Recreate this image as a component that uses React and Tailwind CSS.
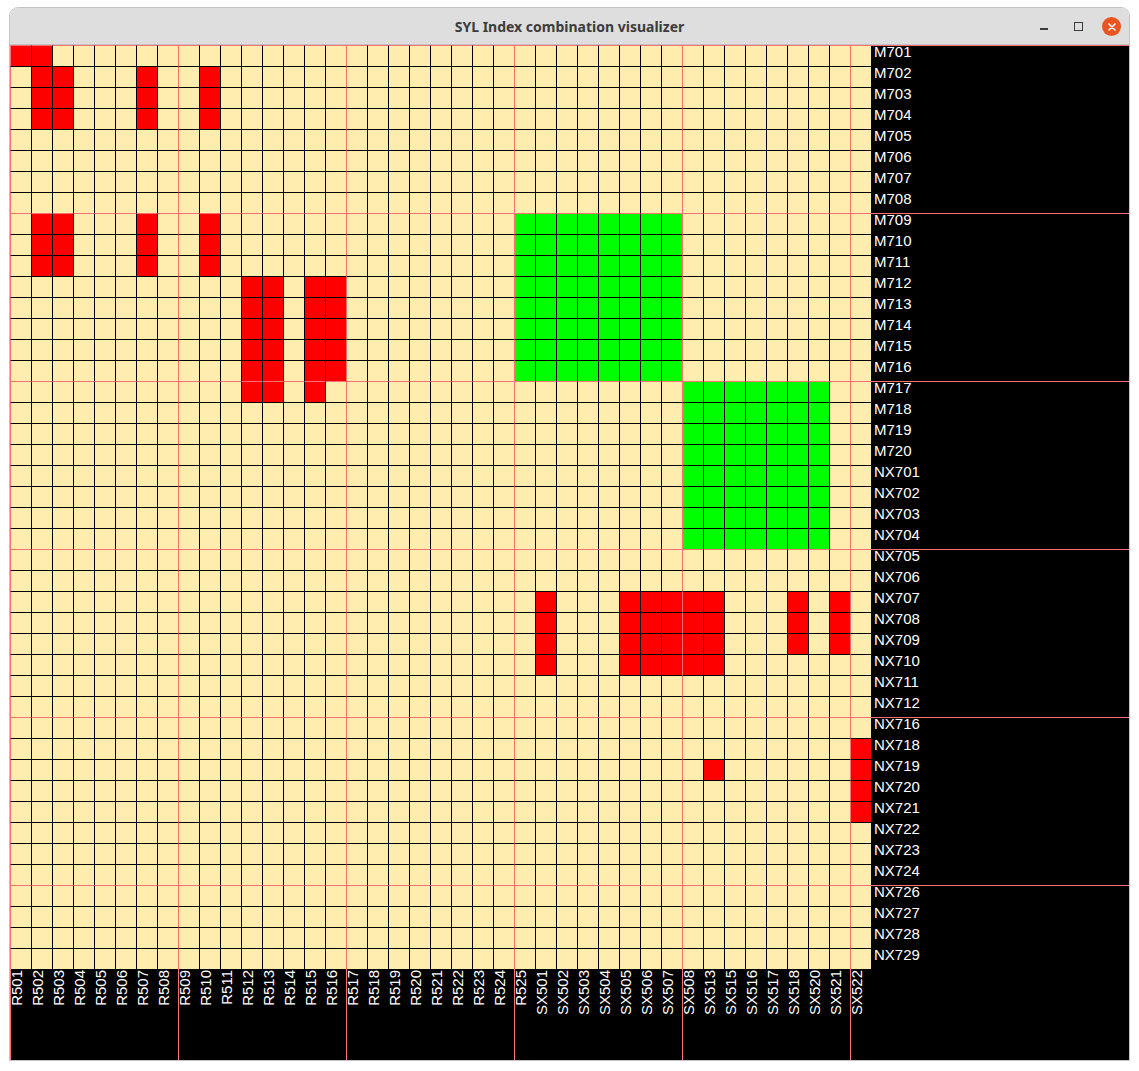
import React from "react";

const COLS = [
  "R501", "R502", "R503", "R504", "R505", "R506", "R507", "R508",
  "R509", "R510", "R511", "R512", "R513", "R514", "R515", "R516",
  "R517", "R518", "R519", "R520", "R521", "R522", "R523", "R524",
  "R525", "SX501", "SX502", "SX503", "SX504", "SX505", "SX506", "SX507",
  "SX508", "SX513", "SX515", "SX516", "SX517", "SX518", "SX520", "SX521",
  "SX522",
];

const ROWS = [
  "M701", "M702", "M703", "M704", "M705", "M706", "M707", "M708",
  "M709", "M710", "M711", "M712", "M713", "M714", "M715", "M716",
  "M717", "M718", "M719", "M720", "NX701", "NX702", "NX703", "NX704",
  "NX705", "NX706", "NX707", "NX708", "NX709", "NX710", "NX711", "NX712",
  "NX716", "NX718", "NX719", "NX720", "NX721", "NX722", "NX723", "NX724",
  "NX726", "NX727", "NX728", "NX729",
];

// [rowFrom, rowTo, colFrom, colTo], inclusive
const RED = [
  [0, 0, 0, 1],
  [1, 3, 1, 2], [1, 3, 6, 6], [1, 3, 9, 9],
  [8, 10, 1, 2], [8, 10, 6, 6], [8, 10, 9, 9],
  [11, 16, 11, 12], [11, 15, 14, 15], [16, 16, 14, 14],
  [26, 29, 25, 25], [26, 29, 29, 33], [26, 28, 37, 37], [26, 28, 39, 39],
  [34, 34, 33, 33], [33, 36, 40, 40],
];

const GREEN = [
  [8, 15, 24, 31],
  [16, 23, 32, 38],
];

const inside = (list, r, c) =>
  list.some(([r0, r1, c0, c1]) => r >= r0 && r <= r1 && c >= c0 && c <= c1);

const cellBg = (r, c) => {
  if (inside(RED, r, c)) return "bg-[#ff0000]";
  if (inside(GREEN, r, c)) return "bg-[#00ff00]";
  return "bg-[#ffecaf]";
};

const Cell = ({ r, c }) => {
  const left = c % 8 === 0 ? "border-l-[#ff7070]" : "border-l-black";
  const top = r % 8 === 0 ? "border-t-[#ff7070]" : "border-t-black";
  return <div className={`w-[21px] h-[21px] shrink-0 border-l border-t ${left} ${top} ${cellBg(r, c)}`} />;
};

const TitleBar = () => (
  <div className="h-[37px] flex items-center bg-[#dedede] border-b border-[#c2c2c2]">
    <div className="w-[110px]" />
    <div className="flex-1 text-center text-[14px] font-bold text-[#3c3c3c] font-['Noto_Sans',sans-serif] pt-[1px]">
      SYL Index combination visualizer
    </div>
    <div className="w-[110px] flex items-center justify-end pr-[8px]">
      <div className="w-[8px] h-[2px] bg-[#3c3c3c] mt-[5px]" />
      <div className="w-[9px] h-[9px] border border-[#3c3c3c] ml-[26px]" />
      <div className="w-[19px] h-[19px] rounded-full bg-[#e95420] ml-[19px] flex items-center justify-center mt-[1px]">
        <svg width="8" height="8" viewBox="0 0 8 8">
          <path d="M1 1 L7 7 M7 1 L1 7" stroke="white" strokeWidth="1.6" strokeLinecap="round" />
        </svg>
      </div>
    </div>
  </div>
);

export default function App() {
  return (
    <div className="min-h-[1071px] bg-white pt-[7px] pl-[9px] font-['Liberation_Sans',Arial,sans-serif]">
      <div className="w-[1121px] border border-[#c4c4c4] rounded-t-[9px] overflow-hidden">
        <TitleBar />
        <div className="bg-black">
          {ROWS.map((name, r) => (
            <div key={name} className="flex">
              {COLS.map((col, c) => (
                <Cell key={col} r={r} c={c} />
              ))}
              <div
                className={`flex-1 h-[21px] border-t pl-[3px] text-white text-[15px] leading-[11px] ${
                  r % 8 === 0 ? "border-t-[#ff7070]" : "border-t-black"
                }`}
              >
                {name}
              </div>
            </div>
          ))}
          <div className="flex h-[91px]">
            {COLS.map((col, c) => (
              <div
                key={col}
                className={`w-[21px] h-full shrink-0 border-l flex flex-col items-start pt-[1px] ${
                  c % 8 === 0 ? "border-l-[#ff7070]" : "border-l-black"
                }`}
              >
                <span className="[writing-mode:vertical-rl] rotate-180 text-white text-[15px] leading-[12px]">
                  {col}
                </span>
              </div>
            ))}
            <div className="flex-1" />
          </div>
        </div>
      </div>
    </div>
  );
}
